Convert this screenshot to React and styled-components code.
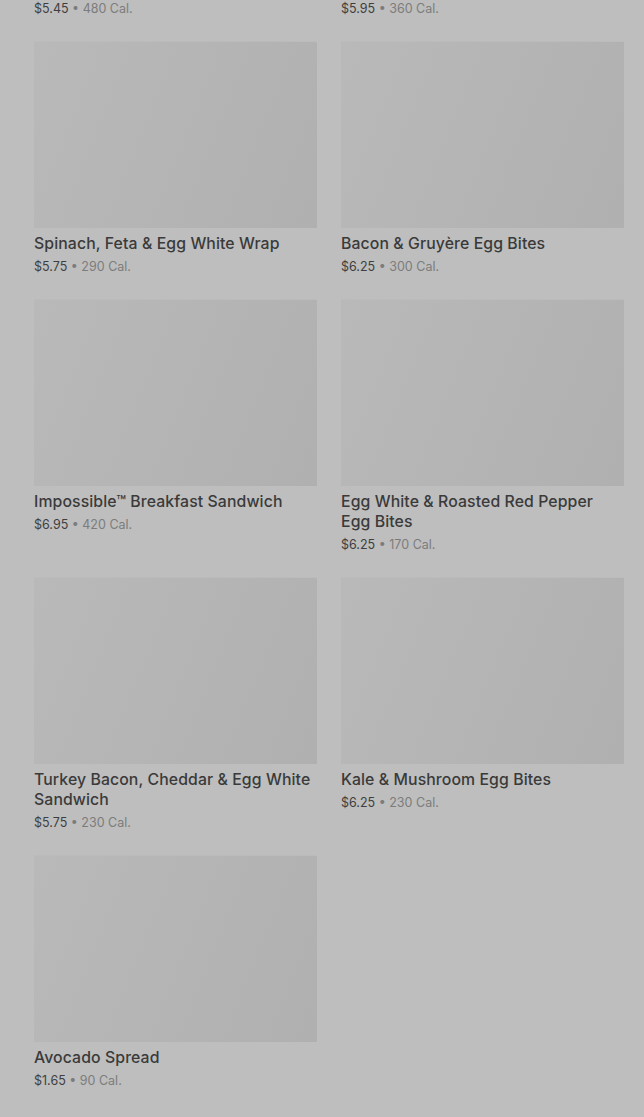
import styled, { createGlobalStyle } from "styled-components";

const GlobalStyle = createGlobalStyle`
  html, body {
    margin: 0;
    padding: 0;
    background: #bebebe;
    overflow: hidden;
  }
`;

const Page = styled.div`
  width: 644px;
  height: 1117px;
  overflow: hidden;
  background: #bebebe;
  font-family: Inter, "Noto Sans", sans-serif;
`;

const Grid = styled.div`
  display: grid;
  grid-template-columns: 283px 283px;
  column-gap: 24px;
  row-gap: 22px;
  align-items: start;
  padding-left: 34px;
  margin-top: -217px;
`;

const Card = styled.div`
  display: flex;
  flex-direction: column;
`;

const Thumb = styled.div`
  height: 187px;
  background: linear-gradient(112deg, #b9b9b9 0%, #b5b5b5 45%, #b0b0b0 100%);
  border-top: 1px solid #bbbbbb;
  box-sizing: border-box;
`;

const Title = styled.div`
  margin-top: 6px;
  font-size: 15.8px;
  line-height: 20px;
  font-weight: 500;
  color: #3a3a3a;
  letter-spacing: 0.1px;
`;

const Meta = styled.div`
  margin-top: 3px;
  font-size: 12.5px;
  line-height: 20px;
  color: #3e3e3e;
`;

const Cal = styled.span`
  color: #7c7c7c;
`;

const items = [
  { name: "Sausage, Cheddar & Egg Sandwich", price: "5.45", cal: 480 },
  { name: "Bacon, Gouda & Egg Sandwich", price: "5.95", cal: 360 },
  { name: "Spinach, Feta & Egg White Wrap", price: "5.75", cal: 290 },
  { name: "Bacon & Gruyère Egg Bites", price: "6.25", cal: 300 },
  { name: "Impossible™ Breakfast Sandwich", price: "6.95", cal: 420 },
  { name: "Egg White & Roasted Red Pepper Egg Bites", price: "6.25", cal: 170 },
  { name: "Turkey Bacon, Cheddar & Egg White Sandwich", price: "5.75", cal: 230 },
  { name: "Kale & Mushroom Egg Bites", price: "6.25", cal: 230 },
  { name: "Avocado Spread", price: "1.65", cal: 90 },
];

export default function App() {
  return (
    <Page>
      <GlobalStyle />
      <Grid>
        {items.map((item) => (
          <Card key={item.name}>
            <Thumb />
            <Title>{item.name}</Title>
            <Meta>
              ${item.price} <Cal>• {item.cal} Cal.</Cal>
            </Meta>
          </Card>
        ))}
      </Grid>
    </Page>
  );
}
